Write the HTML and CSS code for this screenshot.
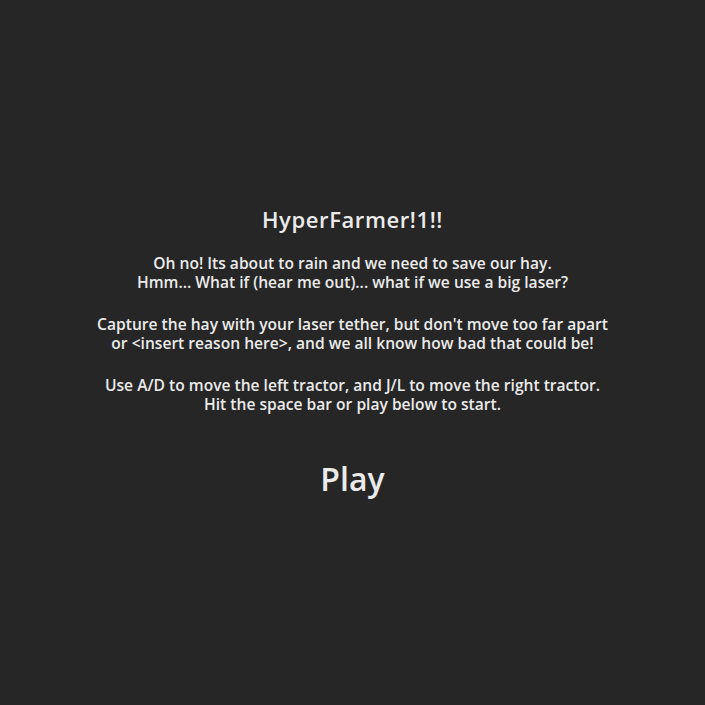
FILE: index.html
```html
<!DOCTYPE html>
<html>
<head>
<meta charset="utf-8">
<link rel="stylesheet" href="styles.css">
</head>
<body>
<main class="screen">
  <h1 class="title">HyperFarmer!1!!</h1>
  <p class="para">Oh no! Its about to rain and we need to save our hay.<br>Hmm... What if (hear me out)... what if we use a big laser?</p>
  <p class="para">Capture the hay with your laser tether, but don't move too far apart<br>or &lt;insert reason here&gt;, and we all know how bad that could be!</p>
  <p class="para">Use A/D to move the left tractor, and J/L to move the right tractor.<br>Hit the space bar or play below to start.</p>
  <div class="play">Play</div>
</main>
</body>
</html>
```
FILE: styles.css
```css
html, body {
  margin: 0;
  padding: 0;
  background: #262626;
  height: 100%;
}
.screen {
  height: 705px;
  display: flex;
  flex-direction: column;
  align-items: center;
  justify-content: center;
  color: #ebebeb;
  font-family: "Open Sans", "DejaVu Sans", sans-serif;
  text-align: center;
}
.title {
  font-size: 22px;
  font-weight: 600;
  letter-spacing: 0.6px;
  margin: 0 0 22px 0;
  line-height: 26px;
}
.para {
  font-size: 15.6px;
  font-weight: 600;
  line-height: 19px;
  margin: 0 0 23px 0;
}
.play {
  margin-top: 22px;
  font-size: 32px;
  font-weight: 600;
  line-height: 40px;
}
```
